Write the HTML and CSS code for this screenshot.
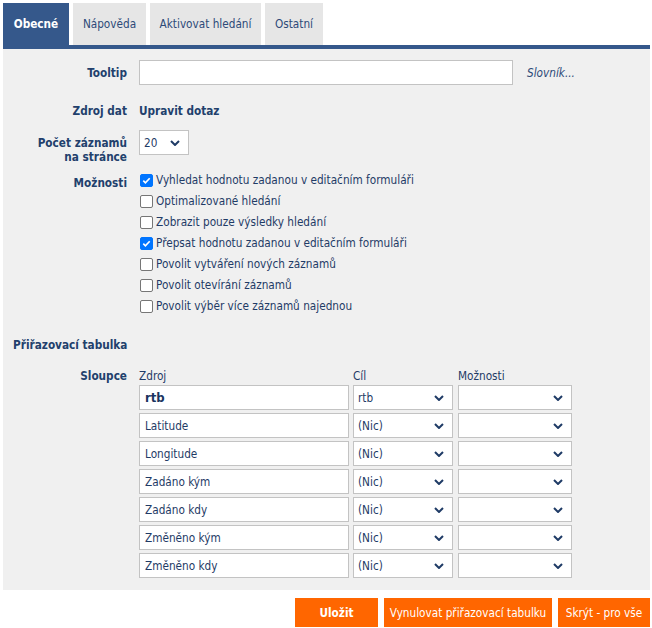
FILE: index.html
```html
<!DOCTYPE html>
<html lang="cs">
<head>
<meta charset="utf-8">
<link rel="stylesheet" href="styles.css">
</head>
<body>
<div class="wrap">
  <div class="tabs">
    <div class="tab active">Obecné</div>
    <div class="tab">Nápověda</div>
    <div class="tab">Aktivovat hledání</div>
    <div class="tab">Ostatní</div>
  </div>
  <div class="panel">
    <div class="row row-tooltip">
      <div class="label">Tooltip</div>
      <div class="field"><input class="text tooltip" type="text"><span class="dict">Slovník...</span></div>
    </div>
    <div class="row row-source">
      <div class="label">Zdroj dat</div>
      <div class="field"><span class="strong">Upravit dotaz</span></div>
    </div>
    <div class="row row-count">
      <div class="label">Počet záznamů<br>na stránce</div>
      <div class="field"><div class="select small"><span>20</span><svg class="chev" viewBox="0 0 10 6"><path d="M1 1l4 4 4-4" fill="none" stroke="#1f3b66" stroke-width="2"/></svg></div></div>
    </div>
    <div class="row row-opts">
      <div class="label">Možnosti</div>
      <div class="field checks">
        <label class="chk"><span class="box on"><svg viewBox="0 0 12 12"><path d="M2.5 6.2l2.3 2.3 4.7-5" fill="none" stroke="#fff" stroke-width="1.8"/></svg></span>Vyhledat hodnotu zadanou v editačním formuláři</label>
        <label class="chk"><span class="box"></span>Optimalizované hledání</label>
        <label class="chk"><span class="box"></span>Zobrazit pouze výsledky hledání</label>
        <label class="chk"><span class="box on"><svg viewBox="0 0 12 12"><path d="M2.5 6.2l2.3 2.3 4.7-5" fill="none" stroke="#fff" stroke-width="1.8"/></svg></span>Přepsat hodnotu zadanou v editačním formuláři</label>
        <label class="chk"><span class="box"></span>Povolit vytváření nových záznamů</label>
        <label class="chk"><span class="box"></span>Povolit otevírání záznamů</label>
        <label class="chk"><span class="box"></span>Povolit výběr více záznamů najednou</label>
      </div>
    </div>
    <div class="section">Přiřazovací tabulka</div>
    <div class="row row-cols">
      <div class="label">Sloupce</div>
      <div class="field">
        <div class="grid">
          <div class="head">Zdroj</div><div class="head">Cíl</div><div class="head">Možnosti</div>
          <div class="text cell bold">rtb</div><div class="select"><span>rtb</span><svg class="chev" viewBox="0 0 10 6"><path d="M1 1l4 4 4-4" fill="none" stroke="#1f3b66" stroke-width="2"/></svg></div><div class="select"><span></span><svg class="chev" viewBox="0 0 10 6"><path d="M1 1l4 4 4-4" fill="none" stroke="#1f3b66" stroke-width="2"/></svg></div>
          <div class="text cell">Latitude</div><div class="select"><span>(Nic)</span><svg class="chev" viewBox="0 0 10 6"><path d="M1 1l4 4 4-4" fill="none" stroke="#1f3b66" stroke-width="2"/></svg></div><div class="select"><span></span><svg class="chev" viewBox="0 0 10 6"><path d="M1 1l4 4 4-4" fill="none" stroke="#1f3b66" stroke-width="2"/></svg></div>
          <div class="text cell">Longitude</div><div class="select"><span>(Nic)</span><svg class="chev" viewBox="0 0 10 6"><path d="M1 1l4 4 4-4" fill="none" stroke="#1f3b66" stroke-width="2"/></svg></div><div class="select"><span></span><svg class="chev" viewBox="0 0 10 6"><path d="M1 1l4 4 4-4" fill="none" stroke="#1f3b66" stroke-width="2"/></svg></div>
          <div class="text cell">Zadáno kým</div><div class="select"><span>(Nic)</span><svg class="chev" viewBox="0 0 10 6"><path d="M1 1l4 4 4-4" fill="none" stroke="#1f3b66" stroke-width="2"/></svg></div><div class="select"><span></span><svg class="chev" viewBox="0 0 10 6"><path d="M1 1l4 4 4-4" fill="none" stroke="#1f3b66" stroke-width="2"/></svg></div>
          <div class="text cell">Zadáno kdy</div><div class="select"><span>(Nic)</span><svg class="chev" viewBox="0 0 10 6"><path d="M1 1l4 4 4-4" fill="none" stroke="#1f3b66" stroke-width="2"/></svg></div><div class="select"><span></span><svg class="chev" viewBox="0 0 10 6"><path d="M1 1l4 4 4-4" fill="none" stroke="#1f3b66" stroke-width="2"/></svg></div>
          <div class="text cell">Změněno kým</div><div class="select"><span>(Nic)</span><svg class="chev" viewBox="0 0 10 6"><path d="M1 1l4 4 4-4" fill="none" stroke="#1f3b66" stroke-width="2"/></svg></div><div class="select"><span></span><svg class="chev" viewBox="0 0 10 6"><path d="M1 1l4 4 4-4" fill="none" stroke="#1f3b66" stroke-width="2"/></svg></div>
          <div class="text cell">Změněno kdy</div><div class="select"><span>(Nic)</span><svg class="chev" viewBox="0 0 10 6"><path d="M1 1l4 4 4-4" fill="none" stroke="#1f3b66" stroke-width="2"/></svg></div><div class="select"><span></span><svg class="chev" viewBox="0 0 10 6"><path d="M1 1l4 4 4-4" fill="none" stroke="#1f3b66" stroke-width="2"/></svg></div>
        </div>
      </div>
    </div>
  </div>
  <div class="buttons">
    <button class="btn b1">Uložit</button>
    <button class="btn b2">Vynulovat přiřazovací tabulku</button>
    <button class="btn b3">Skrýt - pro vše</button>
  </div>
</div>
</body>
</html>
```
FILE: styles.css
```css
* { box-sizing: border-box; }
html, body { margin: 0; padding: 0; background: #fff; }
body {
  font-family: "DejaVu Sans Condensed", "DejaVu Sans", sans-serif;
  font-size: 11.7px;
  color: #1f3b66;
}
.wrap { padding: 3px 2px 0 3px; }
.tabs {
  display: flex;
  gap: 4px;
  border-bottom: 4px solid #35588b;
}
.tab {
  height: 42px;
  display: flex;
  align-items: center;
  justify-content: center;
  padding: 0;
  white-space: nowrap;
  background: #e6e6e6;
  color: #2d4a78;
}
.tab:nth-child(1) { width: 66px; }
.tab:nth-child(2) { width: 73px; }
.tab:nth-child(3) { width: 111px; }
.tab:nth-child(4) { width: 58px; }
.tab.active {
  background: #35588b;
  color: #fff;
  font-weight: bold;
}
.panel {
  background: #f0f0f0;
  padding: 11px 0 12px 0;
}
.row {
  display: grid;
  grid-template-columns: 124px 1fr;
  column-gap: 12px;
}
.label {
  text-align: right;
  font-weight: bold;
  color: #22406c;
  line-height: 14px;
}
.row-tooltip { align-items: center; }
.field { display: flex; align-items: center; }
.text {
  background: #fff;
  border: 1px solid #c3c3c3;
  height: 25px;
}
.tooltip { width: 374px; margin: 0; }
.dict { margin-left: 14px; font-style: italic; color: #2d4a78; }
.row-source { margin-top: 19px; align-items: center; }
.strong { font-weight: bold; color: #22406c; }
.row-count { margin-top: 12px; align-items: start; }
.row-count .label { padding-top: 6px; }
.select {
  background: #fff;
  border: 1px solid #c3c3c3;
  height: 25px;
  display: flex;
  align-items: center;
  justify-content: space-between;
  padding: 0 8px 0 4px;
}
.select.small { width: 50px; }
.chev { width: 10px; height: 6px; display: block; }
.row-opts { margin-top: 9px; align-items: start; }
.row-opts .label { padding-top: 3px; }
.checks { flex-direction: column; align-items: flex-start; gap: 7px; }
.chk { display: flex; align-items: center; height: 14px; }
.box {
  width: 13px; height: 13px;
  border: 1px solid #767676;
  border-radius: 2px;
  background: #fff;
  margin: 0 3px 0 1px;
  display: flex; align-items: center; justify-content: center;
}
.box.on { background: #0075ff; border-color: #0075ff; }
.box svg { width: 11px; height: 11px; display: block; }
.section {
  margin: 25px 0 0 10px;
  font-weight: bold;
  color: #22406c;
}
.row-cols { margin-top: 17px; align-items: start; }
.grid {
  display: grid;
  grid-template-columns: 210px 100px 115px;
  column-gap: 4px;
  row-gap: 3px;
}
.grid > :nth-child(3n) { margin-left: 1px; }
.head { height: 14px; line-height: 14px; margin-bottom: -1px; }
.cell { display: flex; align-items: center; padding-left: 5px; }
.cell.bold { font-weight: bold; font-size: 13px; color: #1a355f; }
.buttons {
  display: flex;
  justify-content: flex-end;
  gap: 6px;
  margin-top: 8px;
}
.btn {
  border: 0;
  background: #ff6600;
  color: #fff;
  font-family: inherit;
  font-size: 11.7px;
  height: 29px;
  padding: 0;
}
.b1 { width: 83px; font-weight: bold; }
.b2 { width: 168px; }
.b3 { width: 92px; }
```
